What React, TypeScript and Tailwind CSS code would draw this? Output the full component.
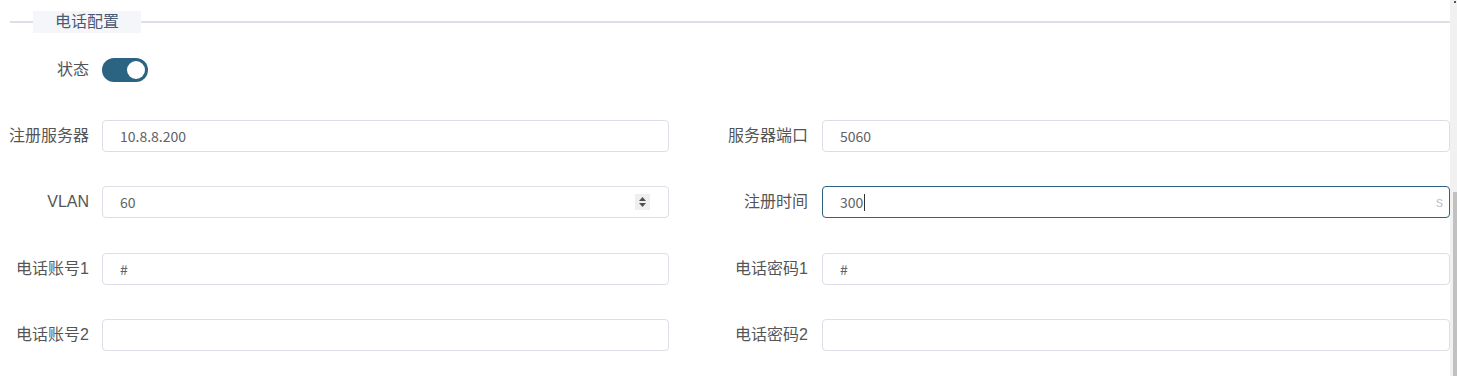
import React from 'react';

const font = { fontFamily: '"Noto Sans CJK SC", "Noto Sans", sans-serif' };
const labelFont = { fontFamily: '"Liberation Sans", "Noto Sans CJK SC", sans-serif' };

function Field({
  value,
  focused = false,
  suffix,
  spinner = false,
}: {
  value?: string;
  focused?: boolean;
  suffix?: string;
  spinner?: boolean;
}) {
  return (
    <div
      className={`flex items-center h-[32px] w-full rounded-[4px] bg-white pl-[17px] pr-[12px] text-[14px] text-[#606266] border ${
        focused ? 'border-[#2c6283]' : 'border-[#dcdfe6]'
      }`}
    >
      <span className="flex-1 flex items-center">
        {value}
        {focused && <span className="w-px h-[17px] bg-[#303133] ml-px" />}
      </span>
      {suffix && (
        <span className="text-[#c0c4cc] text-[14px] -mr-[6px]" style={labelFont}>
          {suffix}
        </span>
      )}
      {spinner && (
        <div className="flex flex-col items-center justify-center gap-[2px] w-[15px] h-[16px] bg-[#efefef] mr-[6px]">
          <svg width="7" height="4" viewBox="0 0 7 4">
            <path d="M0 4 L3.5 0 L7 4 Z" fill="#505050" />
          </svg>
          <svg width="7" height="4" viewBox="0 0 7 4">
            <path d="M0 0 L3.5 4 L7 0 Z" fill="#505050" />
          </svg>
        </div>
      )}
    </div>
  );
}

function Label({ text, w, pr }: { text: string; w: string; pr: string }) {
  return (
    <label className={`${w} ${pr} shrink-0 text-right text-[16px] text-[#555]`} style={labelFont}>
      {text}
    </label>
  );
}

function Row({
  mt,
  left,
  right,
}: {
  mt: string;
  left: { label: string; value?: string; spinner?: boolean };
  right: { label: string; value?: string; focused?: boolean; suffix?: string };
}) {
  return (
    <div className={`flex items-center h-[32px] ${mt}`}>
      <div className="flex items-center w-[669px]">
        <Label text={left.label} w="w-[102px]" pr="pr-[13px]" />
        <Field value={left.value} spinner={left.spinner} />
      </div>
      <div className="flex items-center flex-1 ml-[53px]">
        <Label text={right.label} w="w-[100px]" pr="pr-[14px]" />
        <Field value={right.value} focused={right.focused} suffix={right.suffix} />
      </div>
    </div>
  );
}

export default function App() {
  return (
    <div className="flex w-[1457px] h-[376px] bg-white overflow-hidden" style={font}>
      <div className="flex-1 flex flex-col">
        {/* Section title */}
        <div className="flex items-center h-[22px] mt-[11px]">
          <div className="w-[23px] h-[2px] bg-[#dcdfe6] ml-[10px]" />
          <div
            className="w-[108px] h-[22px] bg-[#f4f6fa] flex items-center justify-center text-[16px] text-[#4b5a74]"
            style={labelFont}
          >
            电话配置
          </div>
          <div className="flex-1 h-[2px] bg-[#dcdfe6]" />
        </div>

        {/* Status switch */}
        <div className="flex items-center h-[32px] mt-[21px]">
          <Label text="状态" w="w-[102px]" pr="pr-[13px]" />
          <div className="flex items-center justify-end w-[46px] h-[24px] rounded-full bg-[#2b6383] pr-[3px]">
            <div className="w-[18px] h-[18px] rounded-full bg-white" />
          </div>
        </div>

        <Row
          mt="mt-[34px]"
          left={{ label: '注册服务器', value: '10.8.8.200' }}
          right={{ label: '服务器端口', value: '5060' }}
        />
        <Row
          mt="mt-[34px]"
          left={{ label: 'VLAN', value: '60', spinner: true }}
          right={{ label: '注册时间', value: '300', focused: true, suffix: 's' }}
        />
        <Row
          mt="mt-[35px]"
          left={{ label: '电话账号1', value: '#' }}
          right={{ label: '电话密码1', value: '#' }}
        />
        <Row mt="mt-[34px]" left={{ label: '电话账号2' }} right={{ label: '电话密码2' }} />
      </div>

      {/* Scrollbar */}
      <div className="w-[7px] bg-[#f1f1f1] flex flex-col items-end">
        <div className="w-[2px] h-[2px] bg-[#555] mt-px mr-[1px]" />
        <div className="w-[4px] flex-1 mt-[189px] bg-[#c1c1c1]" />
      </div>
    </div>
  );
}
